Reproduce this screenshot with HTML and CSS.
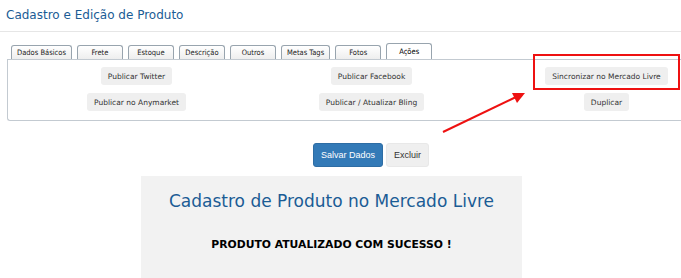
FILE: index.html
```html
<!DOCTYPE html>
<html lang="pt-BR">
<head>
    <meta charset="UTF-8">
    <meta name="viewport" content="width=device-width, initial-scale=1.0">
    <title>Cadastro e Edição de Produto</title>
    <link rel="stylesheet" href="styles.css">
</head>
<body>
    <div class="page">
        <h1 class="pageTitle">Cadastro e Edição de Produto</h1>

        <div class="tabs">
            <div class="tab">Dados Básicos</div>
            <div class="tab">Frete</div>
            <div class="tab">Estoque</div>
            <div class="tab">Descrição</div>
            <div class="tab">Outros</div>
            <div class="tab">Metas Tags</div>
            <div class="tab">Fotos</div>
            <div class="tab active">Ações</div>
        </div>
        <div class="panel">
            <div class="actions">
                <div class="cell"><button class="btnAction">Publicar Twitter</button></div>
                <div class="cell"><button class="btnAction">Publicar Facebook</button></div>
                <div class="cell"><button class="btnAction">Sincronizar no Mercado Livre</button></div>
                <div class="cell"><button class="btnAction">Publicar no Anymarket</button></div>
                <div class="cell"><button class="btnAction">Publicar / Atualizar Bling</button></div>
                <div class="cell"><button class="btnAction">Duplicar</button></div>
            </div>
        </div>

        <div class="formButtons">
            <button class="btnPrimary">Salvar Dados</button>
            <button class="btnDefault">Excluir</button>
        </div>

        <div class="mlBox">
            <h2>Cadastro de Produto no Mercado Livre</h2>
            <p>PRODUTO ATUALIZADO COM SUCESSO !</p>
        </div>

        <!-- marcação em vermelho do print -->
        <div class="highlight"></div>
        <svg class="arrow" width="681" height="278" viewBox="0 0 681 278">
            <line x1="443" y1="132" x2="516" y2="97" stroke="#ee1111" stroke-width="2"/>
            <polygon points="525,93 512,93 517,103" fill="#ee1111"/>
        </svg>
    </div>
</body>
</html>
```

FILE: styles.css
```css
body{
    margin: 0;
    overflow: hidden;
    background: #fff;
    font-family: "DejaVu Sans", Verdana, sans-serif;
}
.page{
    position: relative;
    width: 742px;
    height: 278px;
}
.pageTitle{
    margin: 0;
    padding: 8px 6px 9px;
    font-size: 12px;
    font-weight: normal;
    color: #1b5c95;
    border-bottom: 1px solid #e6e6e6;
}
.tabs{
    display: flex;
    gap: 5px;
    margin: 11px 0 0 11px;
    align-items: flex-end;
    position: relative;
    z-index: 1;
}
.tab{
    box-sizing: border-box;
    min-width: 46px;
    height: 14px;
    padding: 0 5px;
    border: 1px solid #98a4ae;
    border-bottom: none;
    border-radius: 3px 3px 0 0;
    background: linear-gradient(#ffffff, #eeeeee);
    font-family: "DejaVu Sans Condensed", "DejaVu Sans", sans-serif;
    font-size: 7.5px;
    line-height: 13px;
    text-align: center;
    color: #222;
}
.tab.active{
    height: 16px;
    background: #fff;
    line-height: 15px;
    color: #000;
}
.panel{
    margin-left: 7px;
    height: 60px;
    border: 1px solid #c3cad1;
    border-right: none;
    border-radius: 0 0 0 3px;
}
.actions{
    display: grid;
    grid-template-columns: repeat(3, 235px);
    row-gap: 8px;
    padding: 7px 0 0 11px;
}
.cell{
    display: flex;
    justify-content: center;
}
.btnAction{
    height: 18px;
    padding: 0 7px;
    border: none;
    border-radius: 3px;
    background: #efefef;
    font-family: "DejaVu Sans", Verdana, sans-serif;
    font-size: 7.5px;
    color: #333;
}
.formButtons{
    display: flex;
    justify-content: center;
    gap: 3px;
    margin-top: 22px;
}
.formButtons button{
    height: 24px;
    border-radius: 3px;
    font-family: "Liberation Sans", Arial, sans-serif;
    font-size: 9px;
}
.btnPrimary{
    padding: 0 7px;
    border: 1px solid #2e6da4;
    background: #337ab7;
    color: #fff;
}
.btnDefault{
    padding: 0 7px;
    border: 1px solid #e8e8e8;
    background: #efefef;
    color: #333;
}
.mlBox{
    margin: 9px 0 0 141px;
    width: 381px;
    height: 110px;
    background: #f2f2f2;
    text-align: center;
}
.mlBox h2{
    margin: 0;
    padding-top: 15px;
    font-size: 17px;
    font-weight: normal;
    color: #1b5c95;
}
.mlBox p{
    margin: 27px 0 0;
    font-size: 10.8px;
    font-weight: bold;
    color: #000;
}
.highlight{
    position: absolute;
    left: 533px;
    top: 54px;
    width: 143px;
    height: 32px;
    border: 2px solid #ee1111;
}
.arrow{
    position: absolute;
    left: 0;
    top: 0;
    pointer-events: none;
}
```
